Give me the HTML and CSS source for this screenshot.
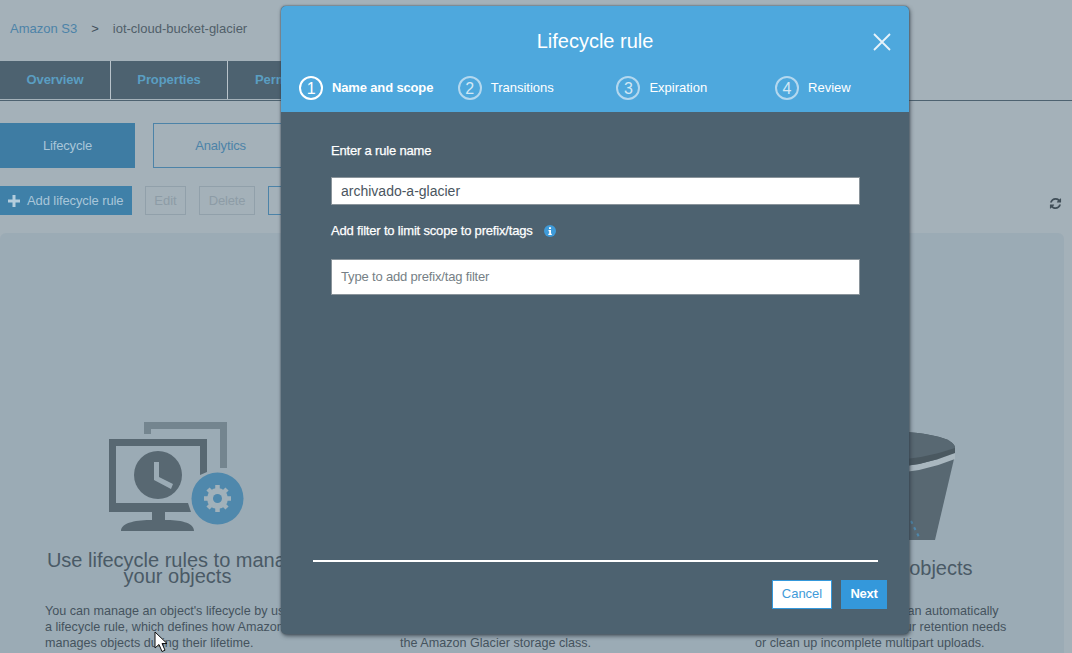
FILE: index.html
```html
<!DOCTYPE html>
<html lang="en">
<head>
<meta charset="utf-8">
<title>Lifecycle rule</title>
<link rel="stylesheet" href="styles.css">
</head>
<body>
<div class="page">
  <nav class="crumbs"><a class="crumb-link">Amazon S3</a><span class="crumb-sep">&gt;</span><span>iot-cloud-bucket-glacier</span></nav>
  <div class="tabs">
    <div class="tab tab-overview">Overview</div>
    <div class="tab tab-properties">Properties</div>
    <div class="tab tab-rest">Permissions</div>
  </div>
  <div class="subtabs">
    <div class="subtab subtab-active">Lifecycle</div>
    <div class="subtab subtab-plain">Analytics</div>
  </div>
  <div class="toolbar">
    <div class="btn btn-add"><svg class="plus" viewBox="0 0 12 12"><path d="M4.500 0h3v4.500H12v3H7.500V12h-3V7.500H0v-3h4.500z"/></svg>Add lifecycle rule</div>
    <div class="btn btn-off btn-edit">Edit</div>
    <div class="btn btn-off btn-delete">Delete</div>
    <div class="btn btn-more">More</div>
    <svg class="refresh" viewBox="0 0 1792 1792"><path d="M1639 1056q0 5-1 7-64 268-268 434.500t-478 166.500q-146 0-282.500-55t-243.500-157l-129 129q-19 19-45 19t-45-19-19-45v-448q0-26 19-45t45-19h448q26 0 45 19t19 45-19 45l-137 137q71 66 161 102t187 36q134 0 250-65t186-179q11-17 53-117 8-23 30-23h192q13 0 22.500 9.500t9.500 22.500zm25-800v448q0 26-19 45t-45 19h-448q-26 0-45-19t-19-45 19-45l138-138q-148-137-349-137-134 0-250 65t-186 179q-11 17-53 117-8 23-30 23h-199q-13 0-22.500-9.500t-9.500-22.500v-7q65-268 270-434.500t480-166.500q146 0 284 55.500t245 156.500l130-129q19-19 45-19t45 19 19 45z"/></svg>
  </div>
  <section class="card">
    <article class="col">
      <svg class="art art-left" viewBox="105 418 145 124">
        <path class="back" d="M147.500 434V425.500H223.500V468"/>
        <path class="mon" d="M109 439h98v33l-7 3v-29h-84v57h72l3 9h-82z"/>
        <circle class="mon" cx="158" cy="475" r="24"/>
        <path class="hand" d="M154 462h5v15l14 7-2 5-17-9z"/>
        <path class="mon" d="M152 511h13v9c14 0 29 2 29 11h-73c0-9 17-11 31-11z"/>
        <circle class="blue" cx="217.500" cy="498.500" r="26"/>
        <g class="gear">
          <circle cx="217.500" cy="498.500" r="10.500"/>
          <g class="teeth"><path d="M217.500 485v27M204 498.500h27M208 489l19 19M227 489l-19 19"/></g>
        </g>
        <circle class="blue" cx="217.500" cy="498.500" r="4.500"/>
      </svg>
      <h2 class="col-title">Use lifecycle rules to manage your objects</h2>
      <p class="col-text">You can manage an object's lifecycle by using<br>a lifecycle rule, which defines how Amazon S3<br>manages objects during their lifetime.</p>
    </article>
    <article class="col">
      <div class="art art-mid"></div>
      <h2 class="col-title">Transition your objects</h2>
      <p class="col-text">Move your objects to another storage class<br>automatically, including, for archiving,<br>the Amazon Glacier storage class.</p>
    </article>
    <article class="col">
      <svg class="art art-right" viewBox="800 418 160 124">
        <path class="mon" d="M821 459h132l-19 81h-95z"/>
        <path class="light" d="M818 453q68 28 136 0v6q-68 28-136 0z"/>
        <path class="rim" d="M818 448c0-22 136-22 136 0v5q-68 28-136 0z"/>
        <path class="mon" d="M818 448c0-22 136-22 136 0q-68 24-136 0z"/>
        <path class="dots" d="M910 521l8 16"/>
      </svg>
      <h2 class="col-title">Expire your objects</h2>
      <p class="col-text">Using a lifecycle rule, you can automatically<br>expire objects based on your retention needs<br>or clean up incomplete multipart uploads.</p>
    </article>
  </section>
</div>

<svg class="cursor" viewBox="0 0 14 22"><path d="M1 1v16l4-3.500 3 7 3-1.300-3-6.700h5z"/></svg>

<div class="modal">
  <header class="modal-head">
    <div class="modal-title">Lifecycle rule</div>
    <svg class="close" viewBox="0 0 18 18"><path d="M1 1l16 16M17 1L1 17"/></svg>
    <ol class="steps">
      <li class="step step-on"><span class="num">1</span>Name and scope</li>
      <li class="step"><span class="num">2</span>Transitions</li>
      <li class="step"><span class="num">3</span>Expiration</li>
      <li class="step"><span class="num">4</span>Review</li>
    </ol>
  </header>
  <div class="modal-body">
    <label class="label label-name">Enter a rule name</label>
    <div class="field field-name">archivado-a-glacier</div>
    <label class="label label-filter">Add filter to limit scope to prefix/tags
      <svg class="info" viewBox="0 0 12 12"><circle cx="6" cy="6" r="6"/><path d="M5 2.200h2v1.700H5zM4.500 5h2.500v3.700h.8V10H4.300V8.700h.9V6.300h-.7z"/></svg>
    </label>
    <div class="field field-filter">Type to add prefix/tag filter</div>
  </div>
  <footer class="modal-foot">
    <div class="foot-btn foot-cancel">Cancel</div>
    <div class="foot-btn foot-next">Next</div>
  </footer>
</div>
</body>
</html>
```

FILE: styles.css
```css
* { box-sizing: border-box; }
html, body { margin: 0; height: 100%; overflow: hidden; }
body {
  background: #a4b1b9;
  font-family: "Liberation Sans", Arial, sans-serif;
  font-size: 13px;
  color: #4a5a66;
  position: relative;
}
.page { height: 653px; display: flex; flex-direction: column; }

.crumbs { height: 61px; padding: 21px 0 0 10px; line-height: 15px; color: #515f69; display: flex; }
.crumb-link { color: #4c83a8; }
.crumb-sep { margin: 0 14px; color: #414f59; }

.tabs { height: 40px; display: flex; align-items: flex-start; border-bottom: 1px solid #4d6270; font-weight: 700; letter-spacing: -.1px; color: #5a9ec2; line-height: 37px; text-align: center; margin-bottom: 22px; }
.tab { height: 38px; background: #4d6270; border-right: 1px solid #b9c3ca; }
.tab-overview { width: 111px; }
.tab-properties { width: 117px; }
.tab-rest { width: 120px; border-right: 0; text-align: left; padding-left: 27px; }

.subtabs { display: flex; gap: 18px; height: 45px; margin-bottom: 18px; letter-spacing: -.15px; }
.subtab { text-align: center; }
.subtab-active { width: 135px; line-height: 45px; background: #3e7ca3; color: #a9c6d9; }
.subtab-plain { width: 135px; line-height: 43px; border: 1px solid #4c83a8; color: #4c83a8; }

.toolbar { height: 29px; display: flex; align-items: stretch; margin-bottom: 18px; }
.btn { line-height: 27px; text-align: center; border: 1px solid transparent; white-space: nowrap; }
.btn-add { width: 132px; background: #3f80a8; color: #a9c6d9; display: flex; align-items: center; padding-left: 7px; margin-right: 13px; letter-spacing: -.1px; }
.plus { width: 12px; height: 12px; flex: none; fill: #b4cddd; margin-right: 7px; }
.btn-off { border-color: #91a0aa; color: #8d9ca6; }
.btn-edit { width: 41px; margin-right: 13px; }
.btn-delete { width: 56px; margin-right: 13px; letter-spacing: -.2px; }
.btn-more { width: 60px; border-color: #4c83a8; color: #4a5a66; }
.refresh { width: 13px; height: 13px; fill: #414f59; margin: 11px 10px 0 auto; }

.card { width: 1064px; flex: 1; background: #9babb5; border-radius: 6px 6px 0 0; padding: 0 0 0 45px; display: flex; gap: 90px; align-items: flex-end; }
.col { width: 265px; display: flex; flex-direction: column; }
.art { height: 124px; display: block; margin-bottom: 10px; }
.art-left { width: 145px; margin-left: 60px; }
.art-right { width: 160px; margin-left: 46px; }
.back { fill: none; stroke: #74858f; stroke-width: 7; }
.mon { fill: #586872; }
.hand { fill: #9babb5; }
.blue { fill: #4f88ac; stroke: none; }
.gear circle { fill: #a1b1ba; }
.teeth path { stroke: #a1b1ba; stroke-width: 4.500; fill: none; }
.rim { fill: #4a5860; }
.light { fill: #a9b7bf; }
.dots { stroke: #4f88ac; stroke-width: 2; stroke-dasharray: 3 4; fill: none; }

.col-title { margin: 0; height: 32px; display: flex; align-items: center; justify-content: center; text-align: center; font-weight: 400; font-size: 20px; line-height: 16px; color: #4a5a66; }
.col-text { margin: 19px 0 0; line-height: 16px; color: #45535e; white-space: nowrap; height: 50px; font-size: 12.600px; }

.cursor { position: absolute; left: 154px; top: 631px; width: 14px; height: 22px; fill: #fff; stroke: #111; stroke-width: 1; }

.modal {
  position: absolute; left: 281px; top: 6px; width: 628px; height: 628px;
  display: flex; flex-direction: column;
  background: #4d6270; border-radius: 5px; overflow: hidden;
  box-shadow: 0 0 2px #3c4a55, 1px 2px 4px rgba(40,50,60,.7);
}
.modal-head { height: 106px; background: #4ea8dd; color: #fff; position: relative; }
.modal-title { text-align: center; font-size: 20px; line-height: 24px; padding-top: 23px; }
.close { position: absolute; left: 592px; top: 27px; width: 18px; height: 18px; stroke: #e8f3fa; stroke-width: 1.800; fill: none; }
.steps { list-style: none; margin: 23px 0 0; padding: 0 0 0 18px; display: flex; }
.step { width: 158.700px; flex: none; display: flex; align-items: center; line-height: 22px; }
.num { width: 24px; height: 24px; border: 2px solid #b3d8ef; border-radius: 50%; text-align: center; line-height: 21px; font-size: 16px; margin-right: 9px; color: #d3e8f5; }
.step-on { font-weight: 700; letter-spacing: -.15px; }
.step-on .num { border-color: #fff; color: #fff; font-weight: 400; }

.modal-body { flex: 1; padding: 31px 50px 0; color: #fff; }
.label { display: block; line-height: 16px; letter-spacing: -.18px; -webkit-text-stroke: .25px #fff; }
.field { width: 529px; background: #fff; border: 1px solid #8a949b; color: #4a5560; padding-left: 9px; }
.field-name { height: 28px; line-height: 26px; margin-top: 18px; font-size: 14px; }
.label-filter { margin-top: 18px; display: flex; align-items: center; }
.info { width: 12px; height: 12px; margin-left: 11px; fill: #3f9bd9; }
.info path { fill: #fff; }
.field-filter { height: 36px; line-height: 34px; margin-top: 20px; color: #767f86; letter-spacing: -.17px; }

.modal-foot { height: 74px; margin: 0 31px 0 32px; border-top: 2px solid #fff; display: flex; justify-content: flex-end; gap: 9px; padding-top: 18px; }
.foot-btn { height: 29px; line-height: 26px; text-align: center; border: 1px solid #3498db; }
.foot-cancel { width: 60px; background: #fff; color: #3f9bd9; }
.foot-next { width: 46px; margin-right: -9px; background: #3498db; color: #fff; font-weight: 700; letter-spacing: -.3px; }
```
